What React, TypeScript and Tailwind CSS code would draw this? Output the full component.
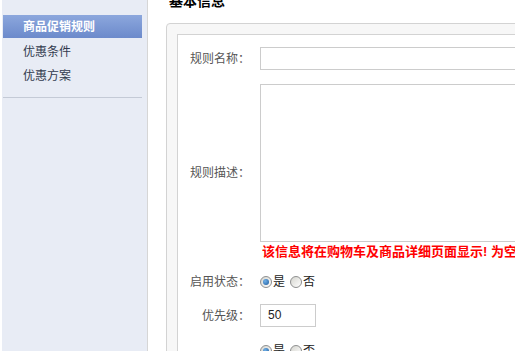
import React from 'react';

const font = { fontFamily: '"Liberation Sans", "Noto Sans CJK SC", sans-serif' };

const Radio: React.FC<{ checked?: boolean }> = ({ checked }) => (
  <span className="relative inline-flex w-[12px] h-[12px] rounded-full border border-[#8e8f8f] bg-gradient-to-br from-[#d6d6d0] to-[#ffffff] items-center justify-center">
    {checked && <span className="w-[6px] h-[6px] rounded-full bg-[radial-gradient(circle_at_35%_35%,#6fb0e8,#1e5a9c)]" />}
  </span>
);

const Label: React.FC<{ children?: React.ReactNode }> = ({ children }) => (
  <div className="w-[72px] shrink-0 text-right text-[12px] text-[#555]">{children}</div>
);

const YesNo: React.FC = () => (
  <div className="flex items-center text-[12px] text-[#222]">
    <Radio checked />
    <span className="ml-[1px]">是</span>
    <span className="ml-[5px] flex"><Radio /></span>
    <span className="ml-[1px]">否</span>
  </div>
);

export default function App() {
  return (
    <div className="flex w-[517px] h-[351px] overflow-hidden bg-white px-[2px]" style={font}>
      {/* Left menu */}
      <aside className="w-[146px] shrink-0 bg-[#e8ecf5] border-r border-[#d6d6d6] pt-[15px] pl-[1px] pr-[5px]">
        <div className="h-[23px] bg-gradient-to-b from-[#8ca7dd] to-[#6c8acb] text-white font-bold text-[12px] leading-[24px] pl-[20px]">
          商品促销规则
        </div>
        <div className="mt-[2px] h-[24px] leading-[24px] pl-[20px] text-[12px] text-[#333b4f]">优惠条件</div>
        <div className="h-[24px] leading-[24px] pl-[20px] text-[12px] text-[#333b4f]">优惠方案</div>
        <div className="mt-[9px] border-t border-[#c4cad6]" />
      </aside>

      {/* Content */}
      <main className="flex-1 overflow-hidden pl-[18px]">
        <h3 className="-mt-[9px] h-[20px] leading-[20px] pl-[3px] text-[14px] font-bold text-black">基本信息</h3>
        <div className="mt-[12px] w-[380px] h-[400px] rounded-tl-[4px] border border-[#d3d3d3] bg-[#f7f7f7] p-[10px]">
          <div className="h-full border border-[#d3d3d3] bg-white pt-[12px]">
            <div className="flex items-center gap-[10px]">
              <Label>规则名称：</Label>
              <div className="w-[300px] h-[23px] border border-[#cccccc]" />
            </div>
            <div className="flex items-center gap-[10px] mt-[14px]">
              <Label>规则描述：</Label>
              <div className="flex flex-col">
                <div className="w-[300px] h-[158px] border border-[#cccccc]" />
                <div className="pl-[2px] h-[18px] leading-[18px] mt-[1px] text-[13px] font-bold text-[#ff0000] whitespace-nowrap">
                  该信息将在购物车及商品详细页面显示! 为空
                </div>
              </div>
            </div>
            <div className="flex items-center gap-[10px] mt-[13px] h-[16px]">
              <Label>启用状态：</Label>
              <YesNo />
            </div>
            <div className="flex items-center gap-[10px] mt-[14px]">
              <Label>优先级：</Label>
              <div className="w-[56px] h-[23px] border border-[#cccccc] pl-[7px] text-[12px] leading-[21px] text-[#222]">50</div>
            </div>
            <div className="flex items-start gap-[10px] mt-[15px] h-[16px]">
              <Label />
              <YesNo />
            </div>
          </div>
        </div>
      </main>
    </div>
  );
}
